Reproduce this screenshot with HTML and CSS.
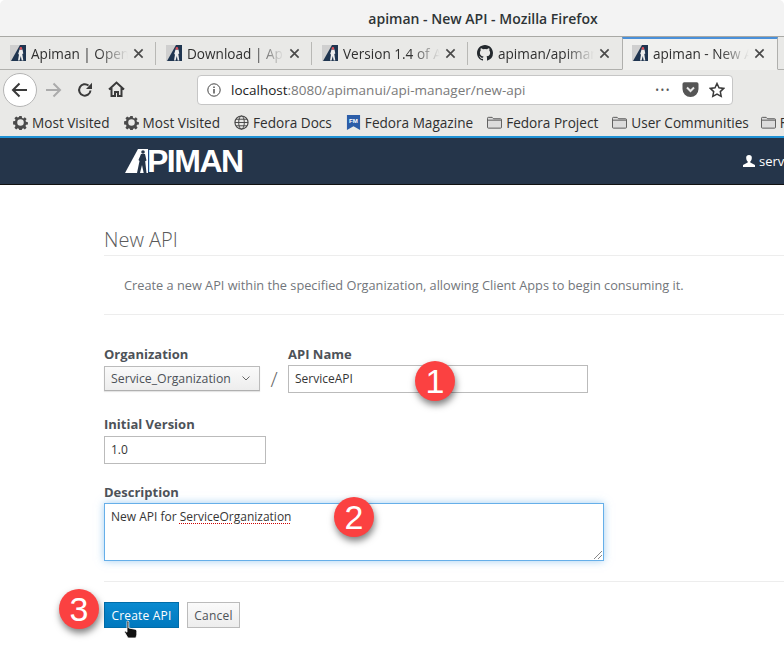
FILE: index.html
```html
<!DOCTYPE html>
<html lang="en">
<head>
<meta charset="utf-8">
<title>apiman - New API - Mozilla Firefox</title>
<link rel="stylesheet" href="styles.css">
</head>
<body>
<svg class="defs" width="0" height="0" aria-hidden="true">
  <symbol id="fav" viewBox="0 0 16 16">
    <rect width="16" height="16" fill="#cfcfcf"/>
    <path d="M10 0 L16 0 L16 16 L1 16 Z" fill="#1f3550"/>
    <path d="M9.500 4.500h3l.8 4-1 .5 1 6.500h-1.600l-.9-4.500-1.200 4.500H8l1-6-.8-.6z" fill="#eee"/>
    <circle cx="10.900" cy="3.400" r="1.300" fill="#d8505a"/>
  </symbol>
  <symbol id="gear" viewBox="0 0 16 16">
    <path fill="#4a4a4a" d="M6.700 1h2.600l.3 2 1.300.6 1.700-1.200 1.900 1.900-1.200 1.700.6 1.300 2 .3v2.600l-2 .3-.6 1.300 1.200 1.700-1.900 1.900-1.700-1.200-1.300.6-.3 2H6.700l-.3-2-1.300-.6-1.700 1.200-1.900-1.900 1.200-1.700-.6-1.300-2-.3V6.700l2-.3.600-1.300-1.200-1.700 1.900-1.900 1.700 1.200 1.300-.6zM8 4.500a3.500 3.500 0 1 0 0 7 3.500 3.500 0 0 0 0-7z" fill-rule="evenodd"/>
  </symbol>
  <symbol id="folder" viewBox="0 0 16 16">
    <path d="M.5 3.500a1 1 0 0 1 1-1h4l1.500 1.500h7.500a1 1 0 0 1 1 1v8a1 1 0 0 1-1 1h-13a1 1 0 0 1-1-1z" fill="#dcdcdc" stroke="#555"/>
    <path d="M1 5.500h14" stroke="#555"/>
  </symbol>
  <symbol id="close" viewBox="0 0 12 12">
    <path d="M1.500 1.500l9 9M10.500 1.500l-9 9" stroke="#4a4a4a" stroke-width="1.800" fill="none"/>
  </symbol>
</svg>

<header class="titlebar">apiman - New API - Mozilla Firefox</header>

<nav class="tabstrip">
  <div class="tab sep"><svg class="favicon"><use href="#fav"/></svg><span class="tab-title">Apiman | Open Source</span><svg class="tab-close"><use href="#close"/></svg></div>
  <div class="tab sep"><svg class="favicon"><use href="#fav"/></svg><span class="tab-title">Download | Apiman</span><svg class="tab-close"><use href="#close"/></svg></div>
  <div class="tab sep"><svg class="favicon"><use href="#fav"/></svg><span class="tab-title">Version 1.4 of Apiman</span><svg class="tab-close"><use href="#close"/></svg></div>
  <div class="tab tab-gh"><svg class="favicon" viewBox="0 0 16 16"><path fill="#24292e" d="M8 0C3.580 0 0 3.580 0 8c0 3.540 2.290 6.530 5.470 7.590.4.070.55-.17.55-.38v-1.340c-2.230.48-2.700-1.070-2.700-1.070-.36-.93-.89-1.170-.89-1.170-.73-.5.050-.49.050-.49.800.060 1.230.83 1.230.83.720 1.220 1.870.87 2.330.660.070-.52.280-.87.510-1.070-1.780-.2-3.640-.89-3.640-3.950 0-.870.310-1.590.820-2.150-.080-.2-.36-1.020.080-2.120 0 0 .67-.21 2.200.82a7.600 7.600 0 0 1 4 0c1.530-1.040 2.200-.82 2.200-.82.440 1.100.160 1.920.080 2.120.51.560.82 1.270.82 2.150 0 3.070-1.870 3.750-3.650 3.950.290.250.540.730.540 1.480v2.200c0 .210.150.46.550.38A8 8 0 0 0 16 8c0-4.420-3.580-8-8-8z"/></svg><span class="tab-title">apiman/apiman: API</span><svg class="tab-close"><use href="#close"/></svg></div>
  <div class="tab active"><svg class="favicon"><use href="#fav"/></svg><span class="tab-title">apiman - New API</span><svg class="tab-close"><use href="#close"/></svg></div>
</nav>

<div class="toolbar">
  <button class="back" aria-label="Back"><svg width="18" height="18" viewBox="0 0 18 18"><path d="M16 9H2.500M8.500 2.500L2 9l6.500 6.500" stroke="#3a3a3a" stroke-width="2" fill="none"/></svg></button>
  <svg class="tool tool-fwd" width="18" height="18" viewBox="0 0 18 18"><path d="M2 9h13.500M9.500 2.500L16 9l-6.500 6.500" stroke="#ababab" stroke-width="2" fill="none"/></svg>
  <svg class="tool tool-reload" width="16" height="16" viewBox="0 0 16 16"><path d="M13.500 8.500A5.700 5.700 0 1 1 11.500 3.600" stroke="#3a3a3a" stroke-width="2" fill="none"/><path d="M15 .8V7H9z" fill="#3a3a3a"/></svg>
  <svg class="tool tool-home" width="17" height="17" viewBox="0 0 17 17"><path d="M1 8.500L8.500 1.500 16 8.500M3.500 7v8h3.500v-4h3v4h3.500V7" stroke="#3a3a3a" stroke-width="2" fill="none"/></svg>
  <div class="urlbar">
    <svg class="info" width="14" height="14" viewBox="0 0 14 14"><circle cx="7" cy="7" r="6.200" stroke="#444" fill="none"/><rect x="6.300" y="6" width="1.400" height="4.500" fill="#444"/><rect x="6.300" y="3.500" width="1.400" height="1.500" fill="#444"/></svg>
    <span class="url"><span class="host">localhost</span>:8080/apimanui/api-manager/new-api</span>
    <span class="dots">•••</span>
    <svg class="pocket" width="17" height="15" viewBox="0 0 16 15"><path d="M0 2a1.800 1.800 0 0 1 1.800-1.800h12.400A1.800 1.800 0 0 1 16 2v5a8 8 0 0 1-16 0z" fill="#555"/><path d="M4.500 5.500L8 9l3.500-3.500" stroke="#e9e9e9" stroke-width="2" fill="none"/></svg>
    <svg class="star" width="16" height="16" viewBox="0 0 16 16"><path d="M8 1.500l2 4.300 4.700.6-3.400 3.200.9 4.700L8 12l-4.200 2.300.9-4.700L1.300 6.400 6 5.800z" stroke="#3a3a3a" stroke-width="1.500" fill="none"/></svg>
  </div>
</div>

<div class="bookmarks">
  <span class="bm"><svg class="bm-icon"><use href="#gear"/></svg>Most Visited</span>
  <span class="bm"><svg class="bm-icon"><use href="#gear"/></svg>Most Visited</span>
  <span class="bm"><svg class="bm-icon" viewBox="0 0 16 16"><circle cx="8" cy="8" r="7" stroke="#444" fill="none" stroke-width="1.200"/><ellipse cx="8" cy="8" rx="3" ry="7" stroke="#444" fill="none"/><path d="M1 8h14M2 4.500h12M2 11.500h12" stroke="#444"/></svg>Fedora Docs</span>
  <span class="bm"><svg class="bm-icon" viewBox="0 0 16 16"><path d="M1 0h14v16l-7-4-7 4z" fill="#2c5da8"/><text x="8" y="8" font-size="6.500" font-weight="700" fill="#fff" text-anchor="middle" font-family="Liberation Sans">FM</text></svg>Fedora Magazine</span>
  <span class="bm"><svg class="bm-icon"><use href="#folder"/></svg>Fedora Project</span>
  <span class="bm"><svg class="bm-icon"><use href="#folder"/></svg>User Communities</span>
  <span class="bm bm-last"><svg class="bm-icon"><use href="#folder"/></svg>F</span>
</div>

<div class="appbar">
  <div class="logo">
    <svg class="logo-mark" width="23" height="24" viewBox="0 0 23 24"><path d="M13 0h10v24H0z" fill="#fff"/><path d="M16 5h4l1.500 6.500-1.300.7L21.500 24h-2.800l-1.700-8-2 8H12l2.500-12-1-1z" fill="#25354a"/><circle cx="18" cy="3" r="1.800" fill="#25354a"/></svg>
    <span class="logo-text">PIMAN</span>
  </div>
  <div class="user"><svg width="12" height="12" viewBox="0 0 12 12"><path d="M6 0a2.800 2.800 0 0 1 2.800 3c0 1.800-.9 3.200-1.500 3.600v.9L12 10v2H0v-2l4.700-2.500v-.9C4.100 6.200 3.200 4.800 3.200 3A2.800 2.800 0 0 1 6 0z" fill="#fff"/></svg><span>serv</span></div>
</div>

<main class="page">
  <h1 class="page-title">New API</h1>
  <p class="intro">Create a new API within the specified Organization, allowing Client Apps to begin consuming it.</p>
  <form class="form">
    <div class="row-name">
      <div class="field">
        <label class="label">Organization</label>
        <div class="select">Service_Organization<svg width="8" height="5" viewBox="0 0 8 5"><path d="M.5.500L4 4 7.500.500" stroke="#666" fill="none"/></svg></div>
      </div>
      <span class="slash">/</span>
      <div class="field">
        <label class="label">API Name</label>
        <div class="input input-name">ServiceAPI</div>
      </div>
    </div>
    <div class="field field-version">
      <label class="label">Initial Version</label>
      <div class="input input-version">1.0</div>
    </div>
    <div class="field field-desc">
      <label class="label">Description</label>
      <div class="textarea">New API for <span class="spell">ServiceOrganization</span></div>
    </div>
    <div class="actions">
      <span class="btn btn-primary">Create API</span>
      <span class="btn btn-default">Cancel</span>
    </div>
  </form>
</main>

<span class="step step-1">1</span>
<span class="step step-2">2</span>
<span class="step step-3">3</span>
<svg class="cursor" width="15" height="20" viewBox="0 0 15 20"><path d="M3.500 1a1.300 1.300 0 0 1 1.300 1.300V8l6 1.200c1.200.3 2 1 2 2.200V15l-1 3H4l-3.500-6 1-1 1.500 1.200V2.300A1.300 1.300 0 0 1 3.500 1z" fill="#111" stroke="#fff" stroke-width=".8"/></svg>
</body>
</html>
```
FILE: styles.css
```css
* { box-sizing: border-box; }
html, body { margin: 0; padding: 0; }
body {
  position: relative;
  width: 784px;
  height: 648px;
  overflow: hidden;
  background: #fff;
  font-family: "Open Sans", "Noto Sans", sans-serif;
  color: #363636;
}
.defs { position: absolute; }

.titlebar {
  height: 37px;
  background: #f3f3f3;
  border-bottom: 1px solid #a9a9a5;
  border-radius: 5px 5px 0 0;
  display: flex;
  align-items: center;
  justify-content: center;
  font-size: 14px;
  font-weight: 600;
  color: #2e3436;
  padding: 1px 0 0 182px;
}

.tabstrip {
  display: flex;
  height: 33px;
  background: #e9e9e7;
  border-bottom: 1px solid #b0b0ad;
}
.tab {
  width: 156px;
  display: flex;
  align-items: center;
  padding: 0 12px 0 10px;
  font-size: 13.600px;
  color: #303030;
  position: relative;
  min-width: 0;
}
.tab.sep::after {
  content: "";
  position: absolute;
  right: 0;
  top: 5px;
  bottom: 4px;
  width: 1px;
  background: #b8b8b5;
}
.tab-gh { width: 154px; padding-left: 9px; }
.tab.active {
  height: 33px;
  background: #f0f0ee;
  border-top: 2px solid #4a90d9;
  border-left: 1px solid #b0b0ad;
  border-right: 1px solid #b0b0ad;
  border-bottom: 1px solid #f0f0ee;
  width: 156px;
  padding: 0 12px 2px 9px;
}
.favicon { width: 16px; height: 16px; flex: none; }
.tab-title {
  flex: 1;
  min-width: 0;
  margin-left: 5px;
  white-space: nowrap;
  overflow: hidden;
  -webkit-mask-image: linear-gradient(to right, #000 70%, transparent 100%);
  mask-image: linear-gradient(to right, #000 70%, transparent 100%);
}
.tab-close { width: 11px; height: 11px; margin-left: 5px; flex: none; }

.toolbar {
  height: 39px;
  background: #e9e9e7;
  display: flex;
  align-items: center;
  padding-left: 3px;
}
.back {
  width: 34px;
  height: 34px;
  border-radius: 50%;
  background: #fff;
  border: 1px solid #b5b5b5;
  padding: 0;
  display: flex;
  align-items: center;
  justify-content: center;
  flex: none;
}
.tool { flex: none; }
.tool-fwd { margin-left: 7px; }
.tool-reload { margin-left: 15px; }
.tool-home { margin-left: 15px; }
.urlbar {
  margin-left: 72px;
  width: 536px;
  height: 30px;
  background: #fff;
  border: 1px solid #c6c6c6;
  border-radius: 4px;
  display: flex;
  align-items: center;
  padding: 0 7px 0 9px;
  font-size: 13.500px;
}
.url { margin-left: 10px; color: #7a7a7a; flex: 1; white-space: nowrap; }
.host { color: #222; }
.dots { font-size: 10px; color: #555; letter-spacing: 1.500px; }
.pocket { margin-left: 11px; }
.star { margin-left: 10px; }

.bookmarks {
  height: 27px;
  background: #e9e9e7;
  display: flex;
  align-items: center;
  padding-left: 13px;
  gap: 14px;
  font-size: 13.600px;
  color: #303030;
  white-space: nowrap;
  overflow: hidden;
}
.bm { display: flex; align-items: center; gap: 4px; flex: none; }
.bm-last { margin-left: -2px; }
.bm-icon { width: 15px; height: 15px; flex: none; }

.appbar {
  height: 49px;
  background: #25354a;
  border-top: 2px solid #1f92d6;
  border-bottom: 1px solid #111;
  display: flex;
  align-items: center;
  justify-content: space-between;
  padding-left: 125px;
  color: #fff;
}
.logo { display: flex; align-items: flex-end; height: 24px; }
.logo-mark { flex: none; }
.logo-text {
  font-family: "Liberation Sans", sans-serif;
  font-weight: 700;
  font-size: 32px;
  line-height: 24px;
  letter-spacing: -1.500px;
  margin-left: -1px;
}
.user {
  display: flex;
  align-items: center;
  gap: 4px;
  font-size: 13px;
  width: 41px;
  flex: none;
  white-space: nowrap;
}
.user svg { flex: none; }

.page { padding: 40px 0 0 104px; }
.page-title {
  margin: 0;
  font-size: 20px;
  font-weight: 300;
  line-height: 29px;
  color: #5a5a5a;
  padding-bottom: 1px;
  border-bottom: 1px solid #ededed;
}
.intro {
  margin: 0;
  padding: 19px 0 19px 20px;
  height: 59px;
  font-size: 12.750px;
  line-height: 21px;
  color: #72767b;
  border-bottom: 1px solid #ededed;
  white-space: nowrap;
}
.form { padding-top: 30px; }
.row-name { display: flex; align-items: flex-start; }
.field { display: flex; flex-direction: column; }
.label {
  font-size: 13px;
  font-weight: 700;
  line-height: 18px;
  color: #4d5258;
  height: 18px;
}
.select {
  width: 156px;
  height: 25px;
  margin-top: 3px;
  display: flex;
  align-items: center;
  justify-content: space-between;
  padding: 0 9px 0 6px;
  font-size: 12.300px;
  color: #4d5258;
  white-space: nowrap;
  background: linear-gradient(#fafafa, #ededed);
  border: 1px solid #bbb;
  border-bottom-color: #b0b0b0;
  box-shadow: 0 1px 1px rgba(0,0,0,.1);
}
.slash {
  width: 28px;
  text-align: center;
  margin-top: 20px;
  font-size: 21px;
  font-weight: 300;
  line-height: 28px;
  color: #666;
}
.input {
  height: 28px;
  border: 1px solid #bbb;
  background: #fff;
  display: flex;
  align-items: center;
  padding: 0 6px 2px;
  font-size: 12px;
  color: #363636;
}
.input-name { width: 300px; margin-top: 2px; }
.input-version { width: 162px; margin-top: 3px; }
.field-version { margin-top: 22px; }
.field-desc { margin-top: 19px; }
.textarea {
  position: relative;
  width: 500px;
  height: 58px;
  margin-top: 2px;
  border: 1px solid #66afe9;
  box-shadow: 0 0 8px rgba(102,175,233,.6);
  padding: 4px 6px;
  font-size: 12px;
  line-height: 17px;
  color: #363636;
  background: #fff;
}
.textarea::after {
  content: "";
  position: absolute;
  right: 1px;
  bottom: 1px;
  width: 10px;
  height: 10px;
  background: repeating-linear-gradient(135deg, transparent 0 2px, #888 2px 3px);
  clip-path: polygon(100% 0, 100% 100%, 0 100%);
}
.spell { text-decoration: underline dotted #c00; text-underline-offset: 2px; }
.actions {
  margin-top: 20px;
  border-top: 1px solid #ededed;
  padding-top: 20px;
  display: flex;
  gap: 8px;
}
.btn {
  height: 26px;
  display: flex;
  align-items: center;
  justify-content: center;
  font-size: 12px;
  font-weight: 500;
  letter-spacing: .2px;
}
.btn-primary {
  width: 75px;
  color: #fff;
  background: linear-gradient(#0a8ad0, #0078be);
  border: 1px solid #006ca8;
}
.btn-default {
  width: 53px;
  color: #4d5258;
  background: linear-gradient(#fafafa, #ededed);
  border: 1px solid #bbb;
}

.step {
  position: absolute;
  width: 40px;
  height: 40px;
  border-radius: 50%;
  background: #fb4141;
  color: #fff;
  font-family: "Liberation Sans", sans-serif;
  font-size: 34px;
  line-height: 40px;
  text-align: center;
  box-shadow: 1px 4px 7px rgba(0,0,0,.5);
}
.step-1 { left: 415px; top: 361px; }
.step-2 { left: 334px; top: 497px; }
.step-3 { left: 59px; top: 589px; }
.cursor { position: absolute; left: 124px; top: 620px; }
```
